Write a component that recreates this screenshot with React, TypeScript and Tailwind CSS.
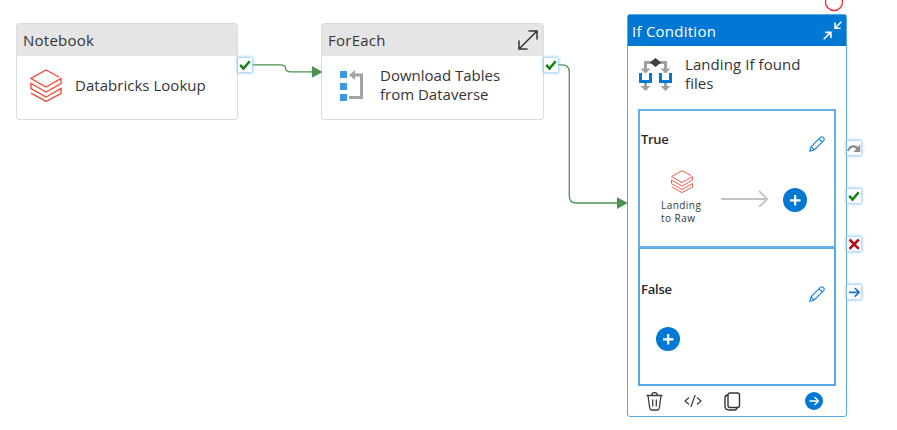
import type { ReactNode } from "react";

function StackIcon({ className, stroke }: { className: string; stroke: number }) {
  return (
    <svg className={className} viewBox="0 0 32 33" fill="none" stroke="#f44a37" strokeWidth={stroke}>
      <path d="M29 8 16 1 1 9.5 16 18l15-8.5v5L16 23 1 14.5v5L16 28l15-8.5v5L16 32.4 1 24.2" />
    </svg>
  );
}

function ForEachIcon() {
  return (
    <svg className="h-8 w-6" viewBox="0 0 24 32">
      <path d="M0 1h7v7H0zM0 13h7v7H0zM0 24h7v7H0z" fill="#3a9ae8" />
      <path d="M14 5h7.5v22.5H9" fill="none" stroke="#a3a3a3" strokeWidth="3" />
      <path d="M15 0v10L9 5z" fill="#a3a3a3" />
    </svg>
  );
}

function BranchIcon() {
  return (
    <svg className="h-[34px] w-[34px]" viewBox="0 0 34 34">
      <path d="M6.5 12V4.5h20V12M6.5 23v6M26.5 23v6" fill="none" stroke="#a0a0a0" strokeWidth="3" />
      <path d="M1.5 10.5h10l-5 5zM21.5 10.5h10l-5 5zM1.5 28h10l-5 5zM21.5 28h10l-5 5z" fill="#a0a0a0" />
      <path d="M1.5 15v8.5h10V15M21.5 15v8.5h10V15" fill="none" stroke="#0078d4" strokeWidth="3" />
      <path d="M16.5 0 22 4.5 16.5 9 11 4.5z" fill="#404040" />
    </svg>
  );
}

function Pencil({ className }: { className: string }) {
  return (
    <svg className={className} viewBox="0 0 16 16" fill="none" stroke="#1580d6" strokeWidth="1.1">
      <path d="M.8 15.2 2 10.8 11.4 1.4a2 2 0 0 1 2.8 0l.4.4a2 2 0 0 1 0 2.8L5.2 14zM10 2.8 13.2 6M2 10.8 5.2 14" />
    </svg>
  );
}

function PlusCircle() {
  return (
    <svg className="size-6 shrink-0" viewBox="0 0 24 24">
      <circle cx="12" cy="12" r="12" fill="#0078d4" />
      <path d="M12.2 7v10.5M7 12.3h10.5" stroke="#fff" strokeWidth="2.2" />
    </svg>
  );
}

function Port({ children, place }: { children: ReactNode; place: string }) {
  return (
    <div className={`absolute size-[14px] bg-white shadow-[0_0_3px_1px_#8fc4ee] ${place}`}>
      <svg className="size-[14px]" viewBox="0 0 14 14" fill="none">{children}</svg>
    </div>
  );
}

const Check = () => <path d="m2.2 6.8 3.3 3.7 6.2-7.2" stroke="#148014" strokeWidth="2.5" />;

function Connectors() {
  return (
    <svg className="absolute left-0 top-0 h-[430px] w-[897px]" viewBox="0 0 897 430" fill="none" stroke="#4a9450" strokeWidth="1.3">
      <path d="M252 64.8h28q5.5 0 5.5 3.5t5.5 3.5h22" />
      <path d="M558 64.8h4q7.3 0 7.3 7.2v124q0 7 7.2 7H618" />
      <path d="M312 66v11.8l10.6-5.9zM617 197.2v11.8l10.8-5.9z" fill="#4a9450" stroke="none" />
      <circle cx="834" cy="2" r="8.5" stroke="#ef2b35" strokeWidth="1.3" />
    </svg>
  );
}

function Activity({ type, place, expand, children }: { type: string; place: string; expand?: boolean; children: ReactNode }) {
  return (
    <section className={`absolute h-[97px] overflow-hidden rounded-[3px] border border-[#dcdcdc] bg-white ${place}`}>
      <header className="flex h-8 items-center justify-between bg-[#e5e5e5] pl-[6px] pr-[5px] text-[15px] tracking-[0.25px]">
        <span>{type}</span>
        {expand && (
          <svg className="h-5 w-5" viewBox="0 0 20 20" fill="none" stroke="#333" strokeWidth="1.5">
            <path d="M1 19 19 1M10.5 1H19v8.5M1 10.5V19h8.5" />
          </svg>
        )}
      </header>
      <div className="flex h-[61px] items-center">{children}</div>
    </section>
  );
}

export default function App() {
  return (
    <main className="relative h-[430px] w-[897px] overflow-hidden bg-white font-['Segoe_UI','Open_Sans','Noto_Sans',sans-serif] text-[#353535]">
      <Activity type="Notebook" place="left-[16px] top-[23px] w-[222px]">
        <StackIcon className="-mt-[2px] ml-[13px] h-[33px] w-8" stroke={1.4} />
        <span className="-mt-[2px] ml-[13px] whitespace-nowrap text-[15px] tracking-[0.03px]">Databricks Lookup</span>
      </Activity>
      <Activity type="ForEach" place="left-[321px] top-[23px] w-[223px]" expand>
        <div className="-mt-px ml-[18px]"><ForEachIcon /></div>
        <p className="-mt-[3px] ml-[16px] whitespace-nowrap text-[15px] leading-[19px]">Download Tables<br />from Dataverse</p>
      </Activity>

      <section className="absolute left-[627px] top-[14px] flex h-[403px] w-[220px] flex-col rounded-[3px] border border-[#58aae6] bg-white">
        <header className="flex h-[31px] shrink-0 items-center justify-between bg-[#0078d4] pl-[4px] pr-[4px] text-[15px] tracking-[0.25px] text-white">
          <span className="relative top-px">If Condition</span>
          <svg className="size-[19px]" viewBox="0 0 19 19" fill="none" stroke="#fff" strokeWidth="1.6">
            <path d="M18.3.8 12.4 6.7M12 1.6v5.6h5.6M.7 18.3 7.4 11.6M2.2 11.4h5.7v5.7" />
          </svg>
        </header>
        <div className="flex h-[63px] shrink-0 pl-[11px] pt-[12px]">
          <BranchIcon />
          <p className="-mt-[3px] ml-[12px] whitespace-nowrap text-[15px] leading-[19px] tracking-[0.08px]">Landing If found<br />files</p>
        </div>
        <div className="ml-[10px] h-[139px] w-[198px] shrink-0 border-2 border-[#65b0e8] pl-px">
          <div className="flex h-[58px] justify-between pr-[9px] pt-[19px]">
            <h3 className="text-[13px] font-semibold leading-[18px] tracking-[-0.3px] text-[#282828]">True</h3>
            <Pencil className="mt-[6px] size-4" />
          </div>
          <div className="flex">
            <div className="ml-[19px] w-[48px]">
              <StackIcon className="ml-[10px] mt-px h-[23px] w-[24px]" stroke={1.3} />
              <p className="ml-px mt-[6px] whitespace-nowrap text-[10px] leading-[13px] tracking-[0.45px]">Landing<br />to Raw</p>
            </div>
            <svg className="ml-[13px] mt-[20px] h-[18px] w-[48px]" viewBox="0 0 48 18" fill="none" stroke="#c5c3c1" strokeWidth="1.8">
              <path d="M0 10h46M38 2l8.3 8-8.3 8" />
            </svg>
            <div className="ml-[14px] mt-[19px]"><PlusCircle /></div>
          </div>
        </div>
        <div className="ml-[10px] h-[138px] w-[198px] shrink-0 border-x-2 border-b-2 border-t border-[#58aae6] pl-px">
          <div className="flex h-[78px] justify-between pr-[9px] pt-[31px]">
            <h3 className="text-[13px] font-semibold leading-[18px] tracking-[-0.2px] text-[#282828]">False</h3>
            <Pencil className="mt-[6px] size-4" />
          </div>
          <div className="ml-[15px]"><PlusCircle /></div>
        </div>
        <footer className="flex h-[30px] items-center pl-[18px]">
          <svg className="h-[19px] w-[17px]" viewBox="0 0 17 19" fill="none" stroke="#3d3d3d" strokeWidth="1.3">
            <path d="M.5 3.5h16M5.5 3.5a3 3 0 0 1 6 0M2 3.5 3.7 16q.2 2 2 2h5.6q1.8 0 2-2L15 3.5M6.7 7.5v7M10.3 7.5v7" />
          </svg>
          <svg className="ml-[21px] h-[14px] w-[18px]" viewBox="0 0 18 14" fill="none" stroke="#3d3d3d" strokeWidth="1.2">
            <path d="m5 3.5-4 3.5 4 3.5M13 3.5 17 7l-4 3.5M11.2 1 6.8 13" />
          </svg>
          <svg className="ml-[22px] h-[19px] w-[17px]" viewBox="0 0 17 19" fill="none" stroke="#343434" strokeWidth="1.4">
            <rect x="4" y="1" width="11.5" height="14.5" rx="2" />
            <path d="M4 3Q1 3.3 1 5.8v8Q1 18 5 18h5.5q2 0 2.5-2" />
          </svg>
          <svg className="ml-[64px] h-[18px] w-[18px]" viewBox="0 0 18 18" fill="none">
            <circle cx="9" cy="9" r="9" fill="#0078d4" />
            <path d="M4.5 9h9M9.5 5l4 4-4 4" stroke="#fff" strokeWidth="1.3" />
          </svg>
        </footer>
      </section>

      <Connectors />
      <Port place="left-[238px] top-[58px]"><Check /></Port>
      <Port place="left-[544px] top-[58px]"><Check /></Port>
      <Port place="left-[847px] top-[141px]">
        <path d="M1 9.8Q2.5 5 7 5.3q3 .3 4.5 4" stroke="#8d8d8d" strokeWidth="2.2" />
        <path d="M13.2 3.3v7.7H6.5z" fill="#8d8d8d" />
      </Port>
      <Port place="left-[847px] top-[189px]"><Check /></Port>
      <Port place="left-[847px] top-[237px]">
        <path d="m2.5 2.5 9.3 9.3M11.8 2.5l-9.3 9.3" stroke="#b01116" strokeWidth="2.6" />
      </Port>
      <Port place="left-[847px] top-[285px]">
        <path d="M2 7.3h10M7.8 3l4.3 4.3L7.8 11.6" stroke="#1976cb" strokeWidth="1.7" />
      </Port>
    </main>
  );
}
